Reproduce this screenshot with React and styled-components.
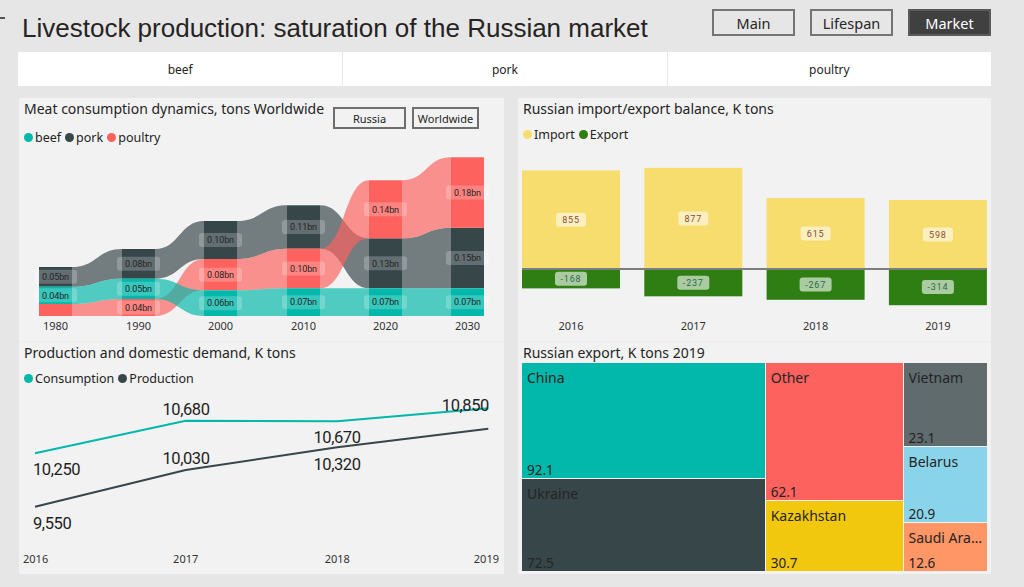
import React from "react";
import styled, { createGlobalStyle } from "styled-components";

const GlobalStyle = createGlobalStyle`
  html, body {
    margin: 0;
    padding: 0;
    background: #e6e6e6;
    font-family: "Noto Sans", "Open Sans", sans-serif;
    color: #252423;
  }
  #root {
    width: 1024px;
    height: 587px;
    overflow: hidden;
  }
`;

const C = { beef: "#01B8AA", pork: "#374649", poultry: "#FD625E" };

const Page = styled.div`
  display: flex;
  flex-direction: column;
  padding: 0 33px 0 18px;
`;

const Header = styled.header`
  display: flex;
  align-items: flex-start;
  height: 52px;
`;

const Mark = styled.span`
  width: 5px;
  height: 2px;
  margin: 17px 0 0 -18px;
  background: #555;
`;

const PageTitle = styled.h1`
  margin: 13px 0 0 17px;
  font-family: "Liberation Sans Narrow", "Liberation Sans", sans-serif;
  font-weight: normal;
  font-size: 26px;
  line-height: 30px;
  color: #252423;
`;

const NavGroup = styled.nav`
  display: flex;
  gap: 15px;
  margin: 9px 0 0 auto;
`;

const NavButton = styled.button`
  width: 83px;
  height: 27px;
  border: 2px solid ${(p) => (p.$active ? "#5a5a5a" : "#747474")};
  background: ${(p) => (p.$active ? "#404040" : "transparent")};
  color: ${(p) => (p.$active ? "#ffffff" : "#252423")};
  font-family: "Noto Sans", sans-serif;
  font-size: 14.5px;
  padding: 0;
`;

const Tabs = styled.div`
  display: grid;
  grid-template-columns: repeat(3, 1fr);
  height: 34px;
  background: #ffffff;
`;

const Tab = styled.div`
  display: flex;
  align-items: center;
  justify-content: center;
  font-size: 12px;
  color: #252423;
  & + & {
    border-left: 1px solid #e8e8e8;
  }
`;

const Grid = styled.main`
  display: grid;
  grid-template-columns: 485px 473px;
  grid-template-rows: 243px 233px;
  column-gap: 14px;
  margin: 12px 0 0 1px;
`;

const Panel = styled.section`
  display: flex;
  flex-direction: column;
  background: #f2f2f2;
  overflow: hidden;
  border-top: ${(p) => (p.$lower ? "1px solid #ececec" : "none")};
`;

const PanelHead = styled.div`
  display: flex;
  flex-direction: column;
  height: ${(p) => p.$h}px;
  padding: 0 5px;
  flex-shrink: 0;
`;

const TitleRow = styled.div`
  display: flex;
  align-items: flex-start;
`;

const PanelTitle = styled.h2`
  margin: ${(p) => p.$top || 1}px 0 0;
  font-size: 14px;
  font-weight: normal;
  line-height: 20px;
  color: #252423;
  white-space: nowrap;
`;

const ToggleGroup = styled.div`
  display: flex;
  gap: 6px;
  margin: 9px 20px 0 auto;
`;

const Toggle = styled.button`
  width: ${(p) => p.$w}px;
  height: 22px;
  border: 2px solid #6e6e6e;
  background: transparent;
  font-family: "Noto Sans", sans-serif;
  font-size: 11px;
  color: #252423;
  padding: 0;
`;

const Legend = styled.div`
  display: flex;
  align-items: center;
  gap: 4px;
  margin-top: ${(p) => p.$top}px;
  font-size: 12.5px;
  color: #252423;
`;

const LegendItem = styled.span`
  display: flex;
  align-items: center;
  gap: 2px;
`;

const Dot = styled.i`
  width: 9px;
  height: 9px;
  border-radius: 50%;
  background: ${(p) => p.$color};
`;

const Chart = styled.svg`
  display: block;
  flex-shrink: 0;
`;

const Treemap = styled.div`
  display: flex;
  gap: 1px;
  height: 208px;
  margin: 0 4px;
`;

const TreeCol = styled.div`
  display: flex;
  flex-direction: column;
  gap: 1px;
  flex: ${(p) => p.$grow} 1 0;
  min-width: 0;
`;

const TreeCell = styled.div`
  display: flex;
  flex-direction: column;
  justify-content: space-between;
  flex: ${(p) => p.$grow} 1 0;
  min-height: 0;
  padding: 5px 5px 0;
  background: ${(p) => p.$color};
  color: #252423;
  font-size: 14px;
  line-height: 19px;
  overflow: hidden;
`;

const CellName = styled.span`
  white-space: nowrap;
  overflow: hidden;
  text-overflow: ellipsis;
`;

const CellValue = styled.span`
  font-size: 13.5px;
  line-height: 15px;
`;

/* ---------- ribbon chart data (screen coords) ---------- */
const years = ["1980", "1990", "2000", "2010", "2020", "2030"];
const barX = [39, 122, 204, 287, 369, 451];
const BW = 33;
const segs = [
  { pork: [267, 286.7, "0.05bn"], beef: [286.7, 304, "0.04bn"], poultry: [304, 316, null] },
  { pork: [249, 278.7, "0.08bn"], beef: [278.7, 299, "0.05bn"], poultry: [299, 316, "0.04bn"] },
  { pork: [221, 259, "0.10bn"], poultry: [259, 290.3, "0.08bn"], beef: [290.3, 316, "0.06bn"] },
  { pork: [205.3, 248.7, "0.11bn"], poultry: [248.7, 288.3, "0.10bn"], beef: [288.3, 316, "0.07bn"] },
  { poultry: [180.3, 238.3, "0.14bn"], pork: [238.3, 288.3, "0.13bn"], beef: [288.3, 316, "0.07bn"] },
  { poultry: [157.3, 227.7, "0.18bn"], pork: [227.7, 288.3, "0.15bn"], beef: [288.3, 316, "0.07bn"] },
];
const series = ["pork", "poultry", "beef"];

function ribbonPath(i, s) {
  const x1 = barX[i] + BW;
  const x2 = barX[i + 1];
  const m = (x1 + x2) / 2;
  const [t1, b1] = segs[i][s];
  const [t2, b2] = segs[i + 1][s];
  return `M${x1},${t1} C${m},${t1} ${m},${t2} ${x2},${t2} L${x2},${b2} C${m},${b2} ${m},${b1} ${x1},${b1} Z`;
}

const RibbonChart = () => (
  <Chart width="485" height="193" viewBox="19 148 485 193">
    {series.map((s) =>
      [0, 1, 2, 3, 4].map((i) => (
        <path key={s + i} d={ribbonPath(i, s)} fill={C[s]} fillOpacity="0.68" />
      ))
    )}
    {segs.map((col, i) =>
      series.map((s) => (
        <rect key={s + i} x={barX[i]} y={col[s][0]} width={BW} height={col[s][1] - col[s][0]} fill={C[s]} />
      ))
    )}
    {segs.map((col, i) =>
      series.map((s) => {
        const [t, b, label] = col[s];
        if (!label) return null;
        const cx = barX[i] + BW / 2;
        const cy = (t + b) / 2;
        return (
          <g key={"l" + s + i}>
            <rect x={cx - 21.5} y={cy - 7} width="43" height="14" rx="3" fill="#ffffff" fillOpacity="0.22" />
            <text x={cx} y={cy + 3.2} textAnchor="middle" fontFamily="Roboto, sans-serif" fontSize="9" letterSpacing="-0.1" fill="#252423">
              {label}
            </text>
          </g>
        );
      })
    )}
    {years.map((y, i) => (
      <text key={y} x={barX[i] + BW / 2} y="330" textAnchor="middle" fontFamily="Noto Sans, sans-serif" fontSize="11" fill="#333">
        {y}
      </text>
    ))}
  </Chart>
);

/* ---------- import / export ---------- */
const balance = [
  { year: "2016", imp: 855, exp: 168 },
  { year: "2017", imp: 877, exp: 237 },
  { year: "2018", imp: 615, exp: 267 },
  { year: "2019", imp: 598, exp: 314 },
];
const BASE = 269;
const SCALE = 0.1153;

const BalanceChart = () => (
  <Chart width="473" height="195" viewBox="518 146 473 195">
    {balance.map((d, i) => {
      const x = 522 + i * 122.3;
      const ih = d.imp * SCALE;
      const eh = d.exp * SCALE;
      const cx = x + 49;
      return (
        <g key={d.year}>
          <rect x={x} y={BASE - ih} width="98" height={ih} fill="#F7DC6E" />
          <rect x={x} y={BASE} width="98" height={eh} fill="#2F7E13" />
          <rect x={cx - 15} y={BASE - ih / 2 - 7} width="30" height="14" rx="3" fill="#ffffff" fillOpacity="0.55" />
          <text x={cx} y={BASE - ih / 2 + 3.3} textAnchor="middle" fontFamily="Roboto, sans-serif" fontSize="9" letterSpacing="0.8" fill="#8c4a3c">
            {d.imp}
          </text>
          <rect x={cx - 16} y={BASE + eh / 2 - 7} width="32" height="14" rx="3" fill="#ffffff" fillOpacity="0.6" />
          <text x={cx} y={BASE + eh / 2 + 3.3} textAnchor="middle" fontFamily="Roboto, sans-serif" fontSize="9" letterSpacing="0.8" fill="#2d6b4d">
            {"-" + d.exp}
          </text>
          <text x={cx} y="330" textAnchor="middle" fontFamily="Noto Sans, sans-serif" fontSize="11" fill="#333">
            {d.year}
          </text>
        </g>
      );
    })}
    <line x1="522" y1={BASE} x2="987" y2={BASE} stroke="#7d7d7d" strokeWidth="2" />
  </Chart>
);

/* ---------- production vs demand ---------- */
const xs = [35, 185.7, 337.3, 488.3];
const consumption = [454.3, 421.7, 422.3, 409.3];
const production = [507.7, 471, 448.3, 429.7];
const lineLabels = [
  { t: "10,250", x: 33, y: 476, a: "start" },
  { t: "10,680", x: 186, y: 416, a: "middle" },
  { t: "10,670", x: 337, y: 444, a: "middle" },
  { t: "10,850", x: 489, y: 412, a: "end" },
  { t: "9,550", x: 33, y: 529.5, a: "start" },
  { t: "10,030", x: 186, y: 465, a: "middle" },
  { t: "10,320", x: 337, y: 471, a: "middle" },
];
const lineYears = [
  { t: "2016", x: 23, a: "start" },
  { t: "2017", x: 185.7, a: "middle" },
  { t: "2018", x: 337.3, a: "middle" },
  { t: "2019", x: 499, a: "end" },
];

const pts = (ys) => ys.map((y, i) => `${xs[i]},${y}`).join(" ");

const LineChart = () => (
  <Chart width="485" height="185" viewBox="19 390 485 185">
    <polyline points={pts(consumption)} fill="none" stroke={C.beef} strokeWidth="2" />
    <polyline points={pts(production)} fill="none" stroke={C.pork} strokeWidth="2" />
    {lineLabels.map((l) => (
      <text key={l.t} x={l.x} y={l.y} textAnchor={l.a} fontFamily="Roboto, sans-serif" fontSize="16.5" letterSpacing="-0.4" fill="#1e1e1e">
        {l.t}
      </text>
    ))}
    {lineYears.map((l) => (
      <text key={l.t} x={l.x} y="564" textAnchor={l.a} fontFamily="Noto Sans, sans-serif" fontSize="11" fill="#333">
        {l.t}
      </text>
    ))}
  </Chart>
);

/* ---------- treemap ---------- */
const exportCols = [
  [
    { name: "China", v: 92.1, color: "#01B8AA" },
    { name: "Ukraine", v: 72.5, color: "#374649" },
  ],
  [
    { name: "Other", v: 62.1, color: "#FD625E" },
    { name: "Kazakhstan", v: 30.7, color: "#F2C80F" },
  ],
  [
    { name: "Vietnam", v: 23.1, color: "#5F6B6D" },
    { name: "Belarus", v: 20.9, color: "#8AD4EB" },
    { name: "Saudi Arabia", v: 12.6, color: "#FE9666" },
  ],
];

const ExportTreemap = () => (
  <Treemap>
    {exportCols.map((col, i) => (
      <TreeCol key={i} $grow={col.reduce((a, c) => a + c.v, 0)}>
        {col.map((c) => (
          <TreeCell key={c.name} $grow={c.v} $color={c.color}>
            <CellName>{c.name}</CellName>
            <CellValue>{c.v}</CellValue>
          </TreeCell>
        ))}
      </TreeCol>
    ))}
  </Treemap>
);

export default function App() {
  return (
    <>
      <GlobalStyle />
      <Page>
        <Header>
          <Mark />
          <PageTitle>Livestock production: saturation of the Russian market</PageTitle>
          <NavGroup>
            <NavButton>Main</NavButton>
            <NavButton>Lifespan</NavButton>
            <NavButton $active>Market</NavButton>
          </NavGroup>
        </Header>

        <Tabs>
          <Tab>beef</Tab>
          <Tab>pork</Tab>
          <Tab>poultry</Tab>
        </Tabs>

        <Grid>
          <Panel>
            <PanelHead $h={50}>
              <TitleRow>
                <PanelTitle>Meat consumption dynamics, tons Worldwide</PanelTitle>
                <ToggleGroup>
                  <Toggle $w={73}>Russia</Toggle>
                  <Toggle $w={67}>Worldwide</Toggle>
                </ToggleGroup>
              </TitleRow>
              <Legend $top={0}>
                <LegendItem><Dot $color={C.beef} />beef</LegendItem>
                <LegendItem><Dot $color={C.pork} />pork</LegendItem>
                <LegendItem><Dot $color={C.poultry} />poultry</LegendItem>
              </Legend>
            </PanelHead>
            <RibbonChart />
          </Panel>

          <Panel>
            <PanelHead $h={48}>
              <PanelTitle>Russian import/export balance, K tons</PanelTitle>
              <Legend $top={7}>
                <LegendItem><Dot $color="#F7DC6E" />Import</LegendItem>
                <LegendItem><Dot $color="#2F7E13" />Export</LegendItem>
              </Legend>
            </PanelHead>
            <BalanceChart />
          </Panel>

          <Panel $lower>
            <PanelHead $h={47}>
              <PanelTitle $top={0}>Production and domestic demand, K tons</PanelTitle>
              <Legend $top={7}>
                <LegendItem><Dot $color={C.beef} />Consumption</LegendItem>
                <LegendItem><Dot $color={C.pork} />Production</LegendItem>
              </Legend>
            </PanelHead>
            <LineChart />
          </Panel>

          <Panel $lower>
            <PanelHead $h={21}>
              <PanelTitle $top={0}>Russian export, K tons 2019</PanelTitle>
            </PanelHead>
            <ExportTreemap />
          </Panel>
        </Grid>
      </Page>
    </>
  );
}
